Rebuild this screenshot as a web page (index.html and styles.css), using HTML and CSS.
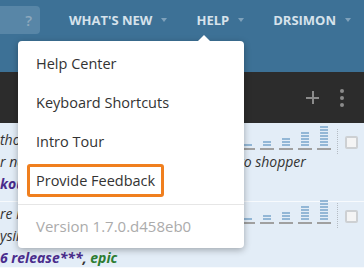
FILE: index.html
```html
<!DOCTYPE html>
<html lang="en">
<head>
    <meta charset="UTF-8">
    <meta name="viewport" content="width=device-width, initial-scale=1.0">
    <title>Help menu</title>
    <link rel="stylesheet" href="styles.css">
</head>
<body>
    <div class="page">
        <!-- Top navigation -->
        <div class="topbar">
            <div class="search"><span class="search-help">?</span></div>
            <div class="nav-item">WHAT'S NEW<span class="caret"></span></div>
            <div class="nav-item">HELP<span class="caret"></span></div>
            <div class="nav-item">DRSIMON<span class="caret"></span></div>
        </div>

        <!-- Dark toolbar -->
        <div class="toolbar">
            <span class="tool-plus"></span>
            <span class="tool-more"><i></i><i></i><i></i></span>
        </div>

        <!-- Story rows -->
        <div class="row row-first">
            <div class="stats">
                <div class="bars">
                    <div class="bar"><span class="stack" style="height: 2px"></span></div>
                    <div class="bar"><span class="stack" style="height: 5px"></span></div>
                    <div class="bar"><span class="stack" style="height: 8px"></span></div>
                    <div class="bar"><span class="stack" style="height: 14px"></span></div>
                    <div class="bar"><span class="stack" style="height: 20px"></span></div>
                </div>
                <div class="stats-sep"></div>
                <div class="check"></div>
            </div>
            <div class="line">thou</div>
            <div class="line">r need a way to move item into the list to shopper</div>
            <div class="line tags"><span class="tag">kour</span></div>
        </div>
        <div class="row">
            <div class="stats">
                <div class="bars">
                    <div class="bar"><span class="stack" style="height: 2px"></span></div>
                    <div class="bar"><span class="stack" style="height: 5px"></span></div>
                    <div class="bar"><span class="stack" style="height: 8px"></span></div>
                    <div class="bar"><span class="stack" style="height: 14px"></span></div>
                    <div class="bar"><span class="stack" style="height: 20px"></span></div>
                </div>
                <div class="stats-sep"></div>
                <div class="check"></div>
            </div>
            <div class="line">re it</div>
            <div class="line">ysirs</div>
            <div class="line tags"><span class="tag">6 release***</span>, <span class="tag tag-green">epic</span></div>
        </div>

        <!-- Help dropdown -->
        <div class="menu">
            <div class="menu-item">Help Center</div>
            <div class="menu-item">Keyboard Shortcuts</div>
            <div class="menu-item">Intro Tour</div>
            <div class="menu-item menu-item-focus">Provide Feedback</div>
            <div class="menu-version">Version 1.7.0.d458eb0</div>
        </div>
    </div>
</body>
</html>
```

FILE: styles.css
```css
html, body {
    margin: 0;
    padding: 0;
}
body {
    font-family: "Open Sans", "DejaVu Sans", sans-serif;
    background-color: #e3edf7;
    overflow: hidden;
}
.page {
    position: relative;
    width: 364px;
    height: 268px;
    overflow: hidden;
}
.topbar {
    display: flex;
    align-items: flex-start;
    height: 72px;
    padding-top: 6px;
    box-sizing: border-box;
    background-color: #3d7196;
}
.search {
    flex-shrink: 0;
    width: 48px;
    height: 28px;
    margin-left: -8px;
    border-radius: 4px;
    background-color: #5886a7;
    display: flex;
    align-items: center;
    justify-content: flex-end;
    box-sizing: border-box;
    padding-right: 8px;
}
.search-help {
    color: #8ea9bd;
    font-size: 15px;
    font-weight: 600;
}
.nav-item {
    flex-shrink: 0;
    display: flex;
    align-items: center;
    height: 28px;
    margin-left: 29px;
    white-space: nowrap;
    color: #d6e2eb;
    font-size: 13px;
    font-weight: 700;
}
.caret {
    width: 0;
    height: 0;
    margin-left: 9px;
    border-left: 3px solid transparent;
    border-right: 3px solid transparent;
    border-top: 4px solid #7fa2bb;
}
.toolbar {
    display: flex;
    align-items: center;
    justify-content: flex-end;
    height: 51px;
    padding-right: 20px;
    background-color: #2c2c2c;
}
.tool-plus {
    width: 13px;
    height: 13px;
    margin-right: 21px;
    background:
        linear-gradient(#8b8b8b, #8b8b8b) center / 13px 2px no-repeat,
        linear-gradient(#8b8b8b, #8b8b8b) center / 2px 13px no-repeat;
}
.tool-more {
    display: flex;
    flex-direction: column;
    gap: 3px;
}
.tool-more i {
    display: block;
    width: 4px;
    height: 4px;
    border-radius: 50%;
    background-color: #8b8b8b;
}
.row {
    padding-top: 1px;
    border-bottom: 1px solid #f7fafd;
    height: 64px;
    font-size: 14px;
    color: #333;
}
.row-first {
    padding-top: 6px;
    height: 72px;
}
.line {
    line-height: 22px;
    font-style: italic;
    white-space: nowrap;
}
.tags {
    line-height: 21px;
    font-weight: 700;
}
.tag {
    color: #4a2c8c;
}
.tag-green {
    color: #2d7d32;
}
.stats {
    float: right;
    display: flex;
    align-items: flex-start;
    margin-right: 6px;
}
.bars {
    display: flex;
    align-items: flex-end;
    gap: 5px;
    height: 21px;
}
.bar {
    display: flex;
    justify-content: center;
    align-items: flex-end;
    width: 14px;
    height: 21px;
    border-bottom: 2px solid #a0a0a0;
    box-sizing: border-box;
}
.stack {
    display: block;
    width: 8px;
    margin-bottom: 2px;
    background: repeating-linear-gradient(to top, #93b7d6 0, #93b7d6 2px, transparent 2px, transparent 3px);
}
.stats-sep {
    width: 0;
    height: 25px;
    margin-left: 6px;
    border-left: 1px dotted #b5bcc4;
}
.check {
    width: 13px;
    height: 13px;
    margin-left: 7px;
    margin-top: 7px;
    box-sizing: border-box;
    border: 2px solid #cdd0d3;
    border-radius: 2px;
    background-color: #f4f4f4;
}
.menu {
    position: absolute;
    left: 18px;
    top: 41px;
    width: 226px;
    padding-top: 6px;
    background-color: #fff;
    border-radius: 4px;
    box-shadow: 0 2px 7px rgba(0, 0, 0, 0.3);
}
.menu::before {
    content: "";
    position: absolute;
    top: -6px;
    left: 180px;
    border-left: 6px solid transparent;
    border-right: 6px solid transparent;
    border-bottom: 6px solid #fff;
}
.menu-item {
    height: 33px;
    line-height: 33px;
    margin: 0 9px 6px 9px;
    padding: 0 9px;
    font-size: 14.5px;
    color: #333;
}
.menu-item-focus {
    display: inline-block;
    height: 33px;
    line-height: 27px;
    padding: 0 6px;
    margin-bottom: 0;
    box-sizing: border-box;
    border: 3px solid #f07f1e;
    border-radius: 3px;
}
.menu-version {
    margin-top: 7px;
    border-top: 1px solid #e6e6e6;
    padding: 0 18px;
    height: 43px;
    line-height: 43px;
    font-size: 15px;
    color: #ababab;
}
```
